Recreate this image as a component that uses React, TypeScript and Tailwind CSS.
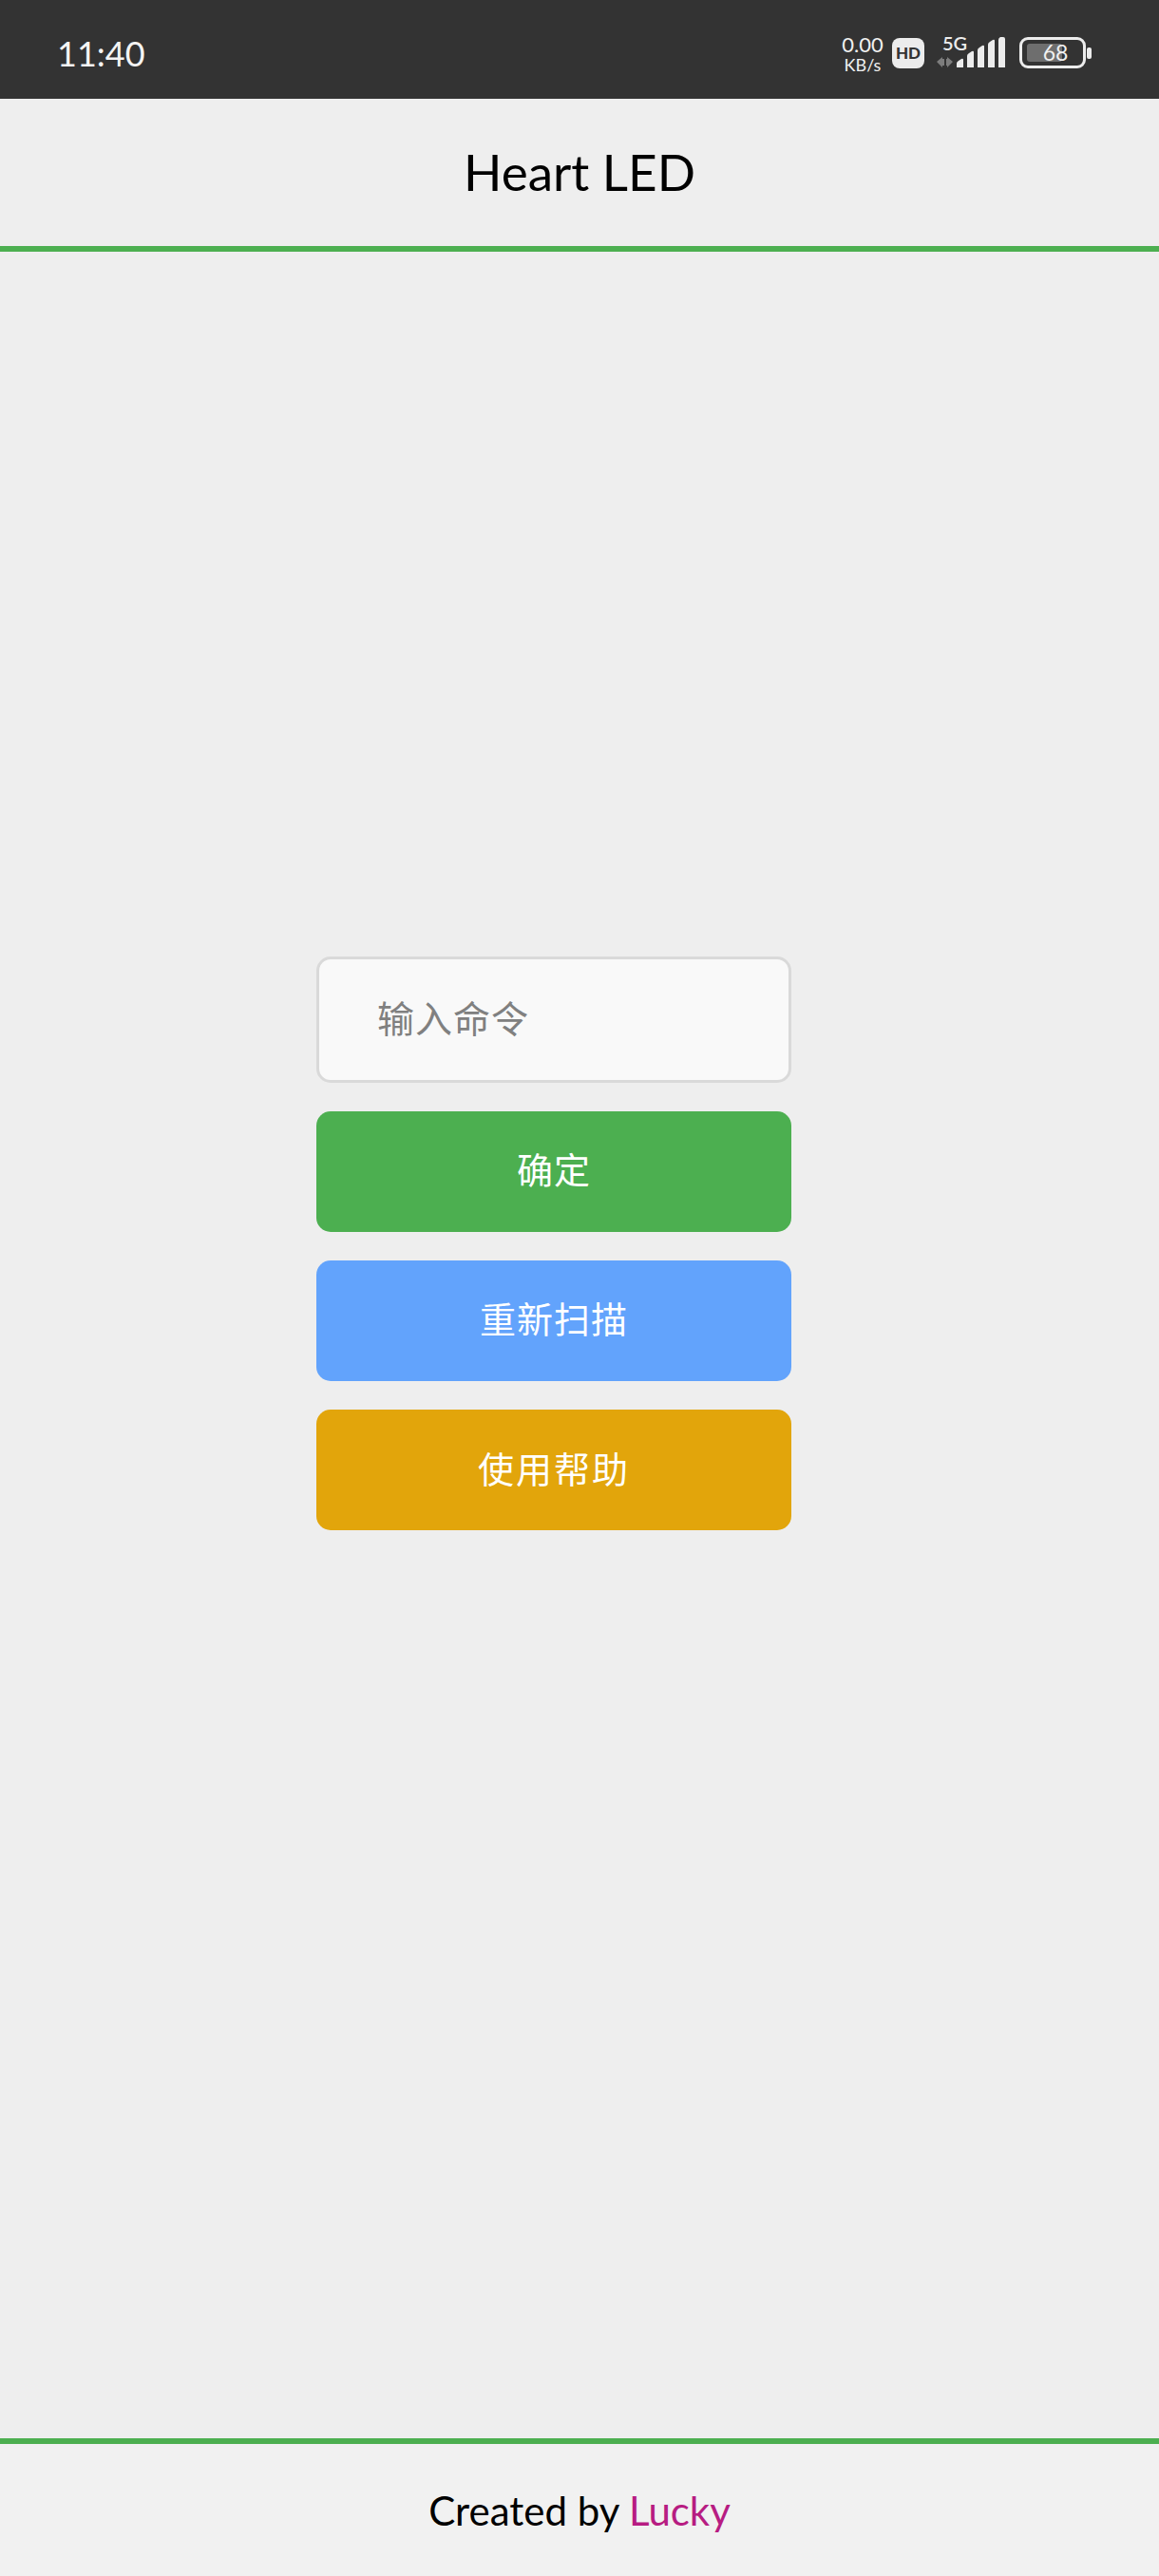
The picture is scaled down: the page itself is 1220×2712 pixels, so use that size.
import React from 'react';

const FONT = "font-['Lato','Noto_Sans_CJK_SC',sans-serif]";

const StatusIcons = () => (
  <div className="flex items-center">
    {/* net speed */}
    <div className="flex flex-col items-center w-[44px] text-[#f0f0f0] leading-none mr-[9px]">
      <span className="text-[22px] leading-[24px]">0.00</span>
      <span className="text-[18px] leading-[18px]">KB/s</span>
    </div>
    {/* HD badge */}
    <div className="w-[34px] h-[32px] rounded-[8px] bg-[#ececec] flex items-center justify-center mr-[13px]">
      <span className="text-[#333333] text-[17px] font-black leading-none">HD</span>
    </div>
    {/* 5G + signal */}
    <div className="relative mr-[15px]">
      <span className="absolute left-[6px] -top-[4px] text-[#ececec] text-[20px] font-semibold leading-none">5G</span>
      <svg width="72" height="33" viewBox="0 0 72 33" className="block">
        <path d="M0 26l6-5v2h2v7H6v2zM17 26l-6-5v2h-1v7h1v2z" fill="#7d7d7d" />
        <path d="M21 32v-4q0-2 2-3l3-2q2-1 2 1v8zM32 32V20q0-2 2-3l3-2q2-1 2 1v16zM43 32V14q0-2 2-3l3-2q2-1 2 1v22zM54 32V8q0-2 2-3l3-2q2-1 2 1v28zM65 32V3q0-2 2-3h3q2 0 2 2v30z" fill="#ececec" />
      </svg>
    </div>
    {/* battery */}
    <div className="flex items-center">
      <div className="relative w-[70px] h-[33px] rounded-[9px] border-[3px] border-[#ececec]">
        <div className="absolute left-[5px] top-[4px] bottom-[4px] w-[37px] rounded-[3px] bg-[#6e6e6e]" />
        <span className="absolute inset-0 flex items-center justify-center pl-[6px] text-[#f0f0f0] text-[23px] leading-none">68</span>
      </div>
      <div className="w-[5px] h-[12px] rounded-[2px] bg-[#ececec] ml-[1px]" />
    </div>
  </div>
);

export default function App() {
  return (
    <div className={`w-[1220px] h-[2712px] flex flex-col bg-[#eeeeee] ${FONT}`}>
      <div className="h-[104px] shrink-0 bg-[#333333] flex items-center justify-between pl-[60px] pr-[71px] pt-[7px]">
        <span className="text-[36px] text-[#f4f4f4] leading-none">11:40</span>
        <StatusIcons />
      </div>

      <header className="h-[161px] shrink-0 border-b-[6px] border-[#4caf50] flex items-center justify-center">
        <h1 className="text-[53px] text-black leading-none -mt-[2px]">Heart LED</h1>
      </header>

      <main className="flex-1 pl-[333px] pt-[742px]">
        <div className="w-[500px] flex flex-col gap-[30px]">
          <input
            placeholder="输入命令"
            className="h-[133px] w-full rounded-[15px] border-[3px] border-[#d9d9d9] bg-[#f9f9f9] pl-[61px] pb-[4px] text-[39px] tracking-[1px] outline-none placeholder:text-[#808080]"
          />
          <button className="h-[127px] rounded-[15px] bg-[#4caf50] pb-[4px] text-white text-[38px] tracking-[1px]">确定</button>
          <button className="h-[127px] rounded-[15px] bg-[#62a3fc] pb-[4px] text-white text-[38px] tracking-[1px]">重新扫描</button>
          <button className="h-[127px] rounded-[15px] bg-[#e2a50b] pb-[2px] text-white text-[38px] tracking-[2px]">使用帮助</button>
        </div>
      </main>

      <footer className="h-[145px] shrink-0 border-t-[6px] border-[#4caf50] bg-[#f1f1f1] flex items-center justify-center">
        <p className="text-[42px] text-black leading-none">
          Created by <span className="text-[#b71c82]">Lucky</span>
        </p>
      </footer>
    </div>
  );
}
